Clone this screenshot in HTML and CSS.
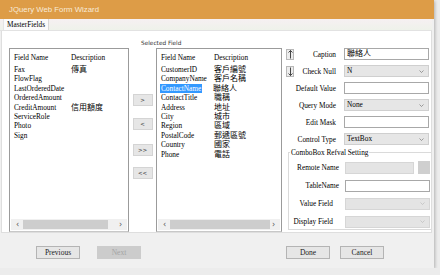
FILE: index.html
```html
<!DOCTYPE html>
<html lang="zh-Hant">
<head>
    <meta charset="UTF-8">
    <title>JQuery Web Form Wizard</title>
    <link rel="stylesheet" href="styles.css">
</head>
<body>
    <div class="window">
        <div class="titlebar">JQuery Web Form Wizard</div>
        <div class="tabs">
            <div class="tab">MasterFields</div>
        </div>
        <div class="panel">
            <div class="caption-row">Selected Field</div>
            <div class="columns">
                <div class="list list-left">
                    <div class="list-head"><span>Field Name</span><span>Description</span></div>
                    <div class="list-body">
                        <div class="row"><span>Fax</span><span class="zh">傳真</span></div>
                        <div class="row"><span>FlowFlag</span><span></span></div>
                        <div class="row"><span>LastOrderedDate</span><span></span></div>
                        <div class="row"><span>OrderedAmount</span><span></span></div>
                        <div class="row"><span>CreditAmount</span><span class="zh">信用額度</span></div>
                        <div class="row"><span>ServiceRole</span><span></span></div>
                        <div class="row"><span>Photo</span><span></span></div>
                        <div class="row"><span>Sign</span><span></span></div>
                    </div>
                    <div class="hscroll">
                        <span class="sarrow">&lsaquo;</span>
                        <span class="thumb"></span>
                        <span class="sarrow">&rsaquo;</span>
                    </div>
                </div>

                <div class="movers">
                    <button class="mv mv-1">&gt;</button>
                    <button class="mv mv-2">&lt;</button>
                    <button class="mv mv-3">&gt;&gt;</button>
                    <button class="mv mv-4">&lt;&lt;</button>
                </div>

                <div class="list list-mid">
                    <div class="list-head"><span>Field Name</span><span>Description</span></div>
                    <div class="list-body">
                        <div class="row"><span>CustomerID</span><span class="zh">客戶編號</span></div>
                        <div class="row"><span>CompanyName</span><span class="zh">客戶名稱</span></div>
                        <div class="row"><span class="sel">ContactName</span><span class="zh">聯絡人</span></div>
                        <div class="row"><span>ContactTitle</span><span class="zh">職稱</span></div>
                        <div class="row"><span>Address</span><span class="zh">地址</span></div>
                        <div class="row"><span>City</span><span class="zh">城市</span></div>
                        <div class="row"><span>Region</span><span class="zh">區域</span></div>
                        <div class="row"><span>PostalCode</span><span class="zh">郵遞區號</span></div>
                        <div class="row"><span>Country</span><span class="zh">國家</span></div>
                        <div class="row"><span>Phone</span><span class="zh">電話</span></div>
                    </div>
                    <div class="hscroll">
                        <span class="sarrow">&lsaquo;</span>
                        <span class="thumb"></span>
                        <span class="sarrow">&rsaquo;</span>
                    </div>
                </div>

                <div class="props">
                    <div class="props-top">
                        <div class="updown">
                            <button class="ud">
                                <svg width="5" height="9" viewBox="0 0 5 9"><path d="M2.5 0.5V8.5M0.5 2.5L2.5 0.5L4.5 2.5" fill="none" stroke="#333" stroke-width="0.9"/></svg>
                            </button>
                            <button class="ud">
                                <svg width="5" height="9" viewBox="0 0 5 9"><path d="M2.5 0.5V8.5M0.5 6.5L2.5 8.5L4.5 6.5" fill="none" stroke="#333" stroke-width="0.9"/></svg>
                            </button>
                        </div>
                        <div class="fields">
                            <div class="field"><label>Caption</label><div class="input zh">聯絡人</div></div>
                            <div class="field"><label>Check Null</label><div class="select">N<svg class="chev" width="5" height="3" viewBox="0 0 5 3"><path d="M0.5 0.5L2.5 2.5L4.5 0.5" fill="none" stroke="#777" stroke-width="0.7"/></svg></div></div>
                            <div class="field"><label>Default Value</label><div class="input"></div></div>
                            <div class="field"><label>Query Mode</label><div class="select">None<svg class="chev" width="5" height="3" viewBox="0 0 5 3"><path d="M0.5 0.5L2.5 2.5L4.5 0.5" fill="none" stroke="#777" stroke-width="0.7"/></svg></div></div>
                            <div class="field"><label>Edit Mask</label><div class="input"></div></div>
                            <div class="field"><label>Control Type</label><div class="select">TextBox<svg class="chev" width="5" height="3" viewBox="0 0 5 3"><path d="M0.5 0.5L2.5 2.5L4.5 0.5" fill="none" stroke="#777" stroke-width="0.7"/></svg></div></div>
                        </div>
                    </div>
                    <div class="group">
                        <div class="legend">ComboBox Refval Setting</div>
                        <div class="gfield"><label>Remote Name</label><div class="input disabled short"></div><div class="pick"></div></div>
                        <div class="gfield"><label>TableName</label><div class="input"></div></div>
                        <div class="gfield"><label class="narrow">Value Field</label><div class="select disabled"><svg class="chev" width="5" height="3" viewBox="0 0 5 3"><path d="M0.5 0.5L2.5 2.5L4.5 0.5" fill="none" stroke="#bbb" stroke-width="0.7"/></svg></div></div>
                        <div class="gfield"><label class="narrow">Display Field</label><div class="select disabled"><svg class="chev" width="5" height="3" viewBox="0 0 5 3"><path d="M0.5 0.5L2.5 2.5L4.5 0.5" fill="none" stroke="#bbb" stroke-width="0.7"/></svg></div></div>
                    </div>
                </div>
            </div>
        </div>
        <div class="footer">
            <div class="nav-left">
                <button class="btn">Previous</button>
                <button class="btn off">Next</button>
            </div>
            <div class="nav-right">
                <button class="btn">Done</button>
                <button class="btn">Cancel</button>
            </div>
        </div>
    </div>
</body>
</html>
```
FILE: styles.css
```css
* {
    margin: 0;
    padding: 0;
    box-sizing: border-box;
}
body {
    background-color: #ececec;
    font-family: "Liberation Serif", "Noto Sans CJK TC", serif;
    font-size: 7.3px;
    color: #000;
}
.zh {
    font-size: 8px;
}
.window {
    width: 434px;
    height: 268px;
    background-color: #f0f0f0;
    box-shadow: 1px 1px 3px rgba(0, 0, 0, 0.25);
    display: flex;
    flex-direction: column;
}
.titlebar {
    height: 19px;
    background-color: #dd9c47;
    color: #f8ead8;
    font-family: "Liberation Sans", sans-serif;
    font-size: 7.8px;
    line-height: 19px;
    padding-left: 9px;
}
.tabs {
    height: 12px;
    background: linear-gradient(#f6f0f2, #eef2ea);
    border-bottom: 1px solid #e2e2e2;
    display: flex;
    padding-left: 3px;
    margin-right: 2px;
}
.tab {
    background-color: #fbfbfb;
    border-right: 1px solid #d8d8d8;
    border-left: 1px solid #e4e4e4;
    padding: 0 3px;
    line-height: 12px;
    font-size: 7.3px;
}
.panel {
    height: 202px;
    background-color: #fff;
    border: 1px solid #dedede;
    border-top: none;
    margin: 0 2px 0 1px;
    display: flex;
    flex-direction: column;
}
.caption-row {
    height: 17px;
    padding: 9px 0 0 139px;
    font-family: "DejaVu Sans", sans-serif;
    font-size: 5.8px;
    color: #333;
}
.columns {
    flex: 1;
    min-height: 0;
    display: flex;
    padding-left: 7px;
}
.list {
    border: 1px solid #9b9b9b;
    border-bottom-color: #c8c8c8;
    display: flex;
    flex-direction: column;
    background-color: #fff;
}
.list-left { width: 120px; }
.list-mid { width: 126px; }
.list-head, .row {
    display: flex;
    align-items: center;
    white-space: nowrap;
}
.list-head {
    padding: 4px 0 0 4px;
    height: 14px;
    align-items: flex-start;
}
.list-body {
    flex: 1;
    padding-left: 4px;
    padding-top: 2px;
}
.row {
    height: 9.4px;
    line-height: 9.4px;
}
.list-left .list-head span:first-child,
.list-left .row span:first-child {
    width: 57px;
}
.list-mid .list-head span:first-child,
.list-mid .row span:first-child {
    width: 53px;
}
.sel {
    background-color: #3399ff;
    color: #fff;
    margin-left: -1px;
    padding-left: 1px;
}
.list-mid .row span.sel {
    width: 42px;
    margin-right: 11px;
}
.hscroll {
    height: 11px;
    display: flex;
    align-items: center;
    background-color: #f0f0f0;
    padding: 0 3px;
    margin: 0 1px 1px;
}
.sarrow {
    width: 7px;
    font-family: "DejaVu Sans", sans-serif;
    font-size: 8px;
    color: #555;
    text-align: center;
    line-height: 10px;
}
.thumb {
    height: 9px;
    background-color: #cdcdcd;
    margin-right: auto;
    margin-left: 2px;
}
.list-left .thumb { width: 85px; }
.list-mid .thumb { width: 100px; }
.movers {
    width: 27px;
    display: flex;
    flex-direction: column;
    align-items: center;
    padding-top: 46px;
}
.mv {
    width: 20px;
    height: 12px;
    background-color: #e6e6e6;
    border: 1px solid #d4d4d4;
    font-family: "DejaVu Sans", sans-serif;
    font-size: 5.5px;
    color: #444;
}
.mv-2 { margin-top: 12px; }
.mv-3 { margin-top: 14px; }
.mv-4 { margin-top: 11px; }
.props {
    flex: 1;
    display: flex;
    flex-direction: column;
    padding: 0 0 2px 4px;
}
.props-top {
    display: flex;
}
.updown {
    width: 9px;
    display: flex;
    flex-direction: column;
    gap: 6px;
    padding-top: 1px;
}
.ud {
    width: 8px;
    height: 11px;
    background-color: #ececec;
    border: 1px solid #b8b8b8;
    display: flex;
    align-items: center;
    justify-content: center;
}
.fields {
    flex: 1;
    display: flex;
    flex-direction: column;
    gap: 5px;
}
.field, .gfield {
    display: flex;
    align-items: center;
    height: 12px;
}
.field label {
    width: 41px;
    text-align: right;
    margin-right: 8px;
    white-space: nowrap;
}
.input, .select {
    width: 85px;
    height: 12px;
    border: 1px solid #a8a8a8;
    background-color: #fff;
    padding-left: 2px;
    line-height: 10px;
    display: flex;
    align-items: center;
}
.select {
    background-color: #e6e6e6;
    border-color: #cfcfcf;
}
.chev {
    margin-left: auto;
    margin-right: 4px;
}
.disabled {
    background-color: #e4e4e4;
    border-color: #d6d6d6;
}
.group {
    position: relative;
    margin: 7px 0 0 2px;
    border: 1px solid #dadada;
    border-right: none;
    flex: 1;
    padding-top: 8px;
    display: flex;
    flex-direction: column;
    gap: 5px;
}
.legend {
    position: absolute;
    top: -5px;
    left: 1px;
    background-color: #fff;
    padding: 0 1px;
    line-height: 9px;
}
.gfield {
    height: 13px;
}
.gfield label {
    width: 50px;
    text-align: right;
    margin-right: 6px;
    white-space: nowrap;
}
.gfield label.narrow {
    width: 44px;
    margin-right: 12px;
}
.gfield .short {
    width: 69px;
}
.pick {
    width: 12px;
    height: 13px;
    background-color: #cfcfcf;
    margin-left: 4px;
}
.footer {
    flex: 1;
    display: flex;
    justify-content: space-between;
    padding: 13px 0 0 36px;
}
.nav-left, .nav-right {
    display: flex;
    gap: 17px;
}
.nav-right {
    gap: 10px;
    margin-right: 50px;
}
.btn {
    width: 44px;
    height: 13px;
    background-color: #e6e6e6;
    border: 1px solid #b4b4b4;
    font-family: "Liberation Serif", serif;
    font-size: 7.5px;
    color: #222;
}
.off {
    background-color: #cccccc;
    border-color: #cccccc;
    color: #a4a4a4;
}
```
